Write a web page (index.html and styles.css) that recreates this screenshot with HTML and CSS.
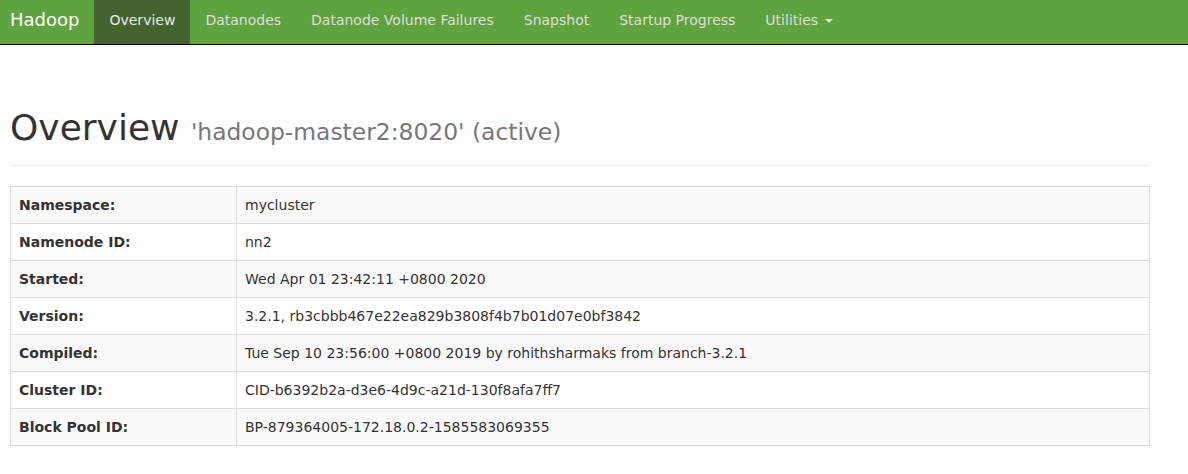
FILE: index.html
```html
<!DOCTYPE html>
<html>
<head>
<meta charset="utf-8">
<title>Namenode information</title>
<link rel="stylesheet" href="styles.css">
</head>
<body>
<header class="navbar">
  <div class="brand">Hadoop</div>
  <ul class="nav">
    <li class="active"><a>Overview</a></li>
    <li><a>Datanodes</a></li>
    <li><a>Datanode Volume Failures</a></li>
    <li><a>Snapshot</a></li>
    <li><a>Startup Progress</a></li>
    <li><a>Utilities <span class="caret"></span></a></li>
  </ul>
</header>
<main class="container">
  <div class="page-header">
    <h1>Overview <small>'hadoop-master2:8020' (active)</small></h1>
  </div>
  <table class="info">
    <tr><th>Namespace:</th><td>mycluster</td></tr>
    <tr><th>Namenode ID:</th><td>nn2</td></tr>
    <tr><th>Started:</th><td>Wed Apr 01 23:42:11 +0800 2020</td></tr>
    <tr><th>Version:</th><td>3.2.1, rb3cbbb467e22ea829b3808f4b7b01d07e0bf3842</td></tr>
    <tr><th>Compiled:</th><td>Tue Sep 10 23:56:00 +0800 2019 by rohithsharmaks from branch-3.2.1</td></tr>
    <tr><th>Cluster ID:</th><td>CID-b6392b2a-d3e6-4d9c-a21d-130f8afa7ff7</td></tr>
    <tr><th>Block Pool ID:</th><td>BP-879364005-172.18.0.2-1585583069355</td></tr>
  </table>
</main>
</body>
</html>
```
FILE: styles.css
```css
* { box-sizing: border-box; }
html, body {
  margin: 0;
  padding: 0;
  background: #fff;
  font-family: "DejaVu Sans", "Helvetica Neue", Helvetica, Arial, sans-serif;
  font-size: 14px;
  line-height: 20px;
  color: #333;
}
.navbar {
  display: flex;
  align-items: stretch;
  height: 45px;
  background: #5fa33e;
  border-bottom: 1px solid #000;
}
.brand {
  padding: 0 15px 0 10px;
  font-size: 18px;
  line-height: 40px;
  color: #fff;
}
.nav {
  display: flex;
  list-style: none;
  margin: 0;
  padding: 0;
}
.nav li a {
  display: block;
  height: 44px;
  padding: 10px 15px 14px;
  line-height: 20px;
  color: #ddd;
}
.nav li.active a {
  background: #43632f;
  color: #e8e8e8;
}
.caret {
  display: inline-block;
  width: 0;
  height: 0;
  margin-left: 2px;
  vertical-align: middle;
  border-top: 4px solid;
  border-right: 4px solid transparent;
  border-left: 4px solid transparent;
}
.container {
  width: 1140px;
  margin-left: 10px;
}
.page-header {
  margin: 63px 0 20px;
  padding-bottom: 17px;
  border-bottom: 1px solid #eee;
}
.page-header h1 {
  margin: 0;
  font-size: 36px;
  line-height: 40px;
  font-weight: 500;
  color: #333;
}
.page-header h1 small {
  font-size: 65%;
  line-height: 1;
  font-weight: 400;
  color: #777;
}
.info {
  width: 100%;
  border-collapse: collapse;
  border: 1px solid #ddd;
}
.info th, .info td {
  border: 1px solid #ddd;
  padding: 8px;
  line-height: 20px;
  text-align: left;
  vertical-align: top;
}
.info th {
  width: 226px;
  font-weight: bold;
}
.info tr:nth-child(odd) {
  background: #f9f9f9;
}
```
